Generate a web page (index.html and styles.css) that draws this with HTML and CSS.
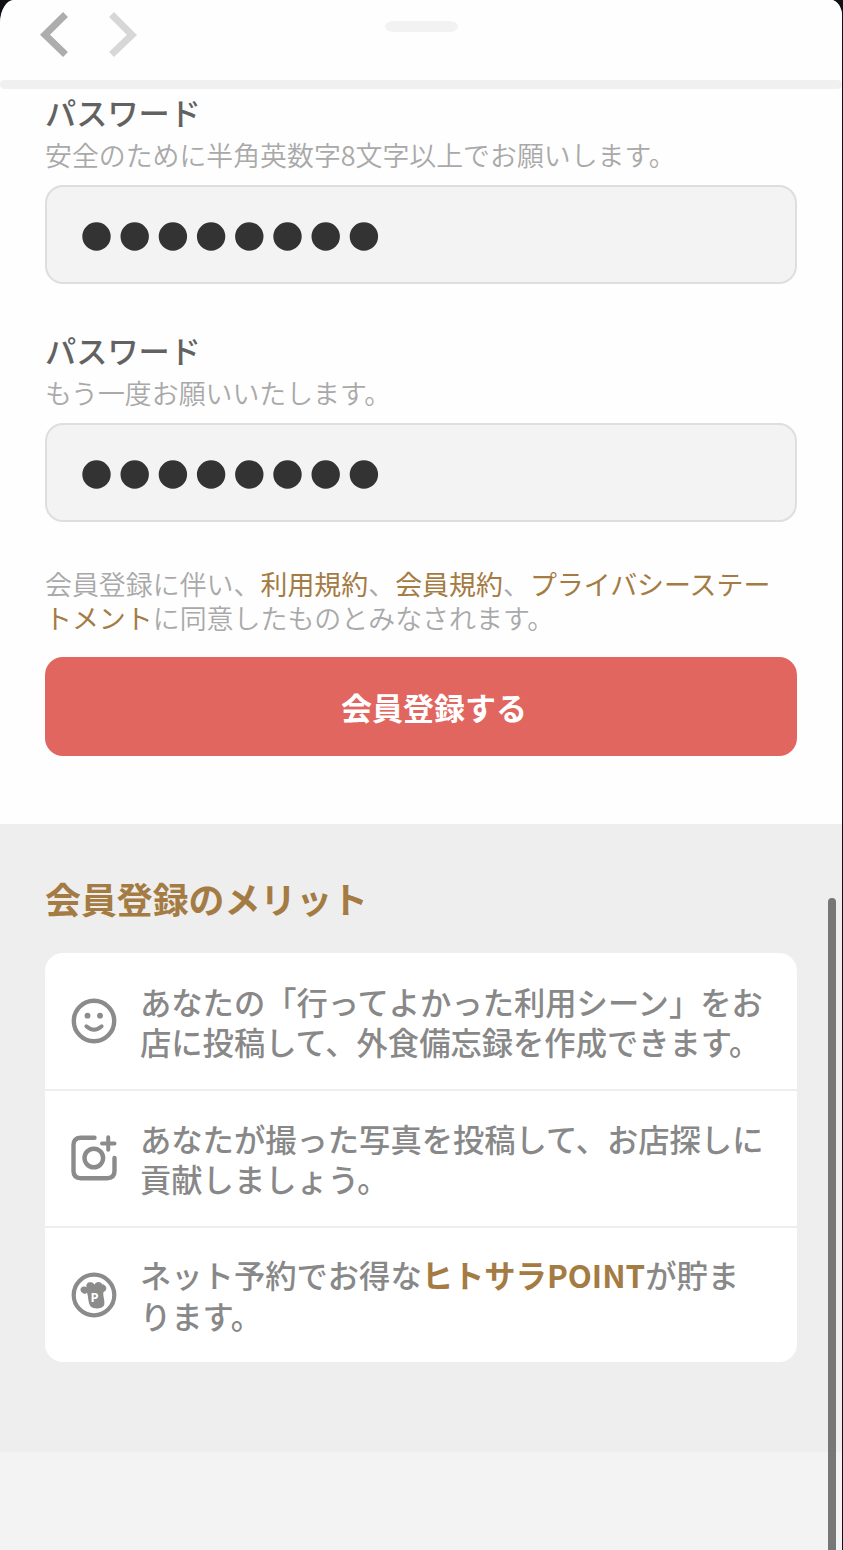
FILE: index.html
```html
<!DOCTYPE html>
<html lang="ja">
<head>
<meta charset="utf-8">
<title>会員登録</title>
<link rel="stylesheet" href="styles.css">
</head>
<body>
<div class="sheet">
  <header class="toolbar">
    <svg class="nav" width="110" height="50" viewBox="0 0 110 50" fill="none" stroke-width="7">
      <path d="M29.500 6.500 9 26.700 29.500 46.500" stroke="#adadad"/>
      <path d="M75.500 6.500 96 26.900 75.500 46.500" stroke="#d7d7d7"/>
    </svg>
    <span class="grabber"></span>
  </header>
  <div class="divider"></div>
  <svg width="0" height="0" class="defs">
    <symbol id="dots" viewBox="0 0 300 30">
      <path d="M15.500 15.500H283" fill="none" stroke="#333" stroke-width="28.400" stroke-linecap="round" stroke-dasharray="0 38.200"/>
    </symbol>
  </svg>
  <form class="form">
    <section class="field">
      <label class="label">パスワード</label>
      <p class="hint">安全のために半角英数字8文字以上でお願いします。</p>
      <div class="input"><svg width="300" height="30"><use href="#dots"/></svg></div>
    </section>
    <section class="field">
      <label class="label">パスワード</label>
      <p class="hint">もう一度お願いいたします。</p>
      <div class="input"><svg width="300" height="30"><use href="#dots"/></svg></div>
    </section>
    <p class="legal">会員登録に伴い、<a>利用規約</a>、<a>会員規約</a>、<a>プライバシーステー<br>トメント</a>に同意したものとみなされます。</p>
    <button class="submit" type="button">会員登録する</button>
  </form>
  <section class="merits">
    <h2 class="title">会員登録のメリット</h2>
    <ul class="card">
      <li class="row">
        <svg class="icon" width="46" height="46" viewBox="0 0 46 46" fill="none" stroke="#8b8b8b" stroke-linecap="round">
          <circle cx="23" cy="23" r="20.200" stroke-width="4.400"/>
          <path d="M15.300 28.300Q23 35 30.700 28.300" stroke-width="3.800"/>
          <circle cx="16.500" cy="17.700" r="2.900" fill="#8b8b8b" stroke="none"/>
          <circle cx="29" cy="17.700" r="2.900" fill="#8b8b8b" stroke="none"/>
        </svg>
        <p>あなたの「行ってよかった利用シーン」をお<br>店に投稿して、外食備忘録を作成できます。</p>
      </li>
      <li class="row">
        <svg class="icon" width="46" height="46" viewBox="0 0 46 46" fill="none" stroke="#8b8b8b" stroke-width="4.400" stroke-linecap="round">
          <path d="M23.500 2.800H10Q2.500 2.800 2.500 10V36Q2.500 43.200 10 43.200H36Q43.500 43.200 43.500 36V23"/>
          <circle cx="22.800" cy="23" r="9.300"/>
          <path d="M31 8.500H43.500M37.200 2.300V14.800" stroke-width="4"/>
        </svg>
        <p>あなたが撮った写真を投稿して、お店探しに<br>貢献しましょう。</p>
      </li>
      <li class="row">
        <svg class="icon" width="46" height="46" viewBox="0 0 46 46">
          <circle cx="23" cy="23" r="20.300" fill="none" stroke="#8b8b8b" stroke-width="4.200"/>
          <path d="M11 20.500C8.300 18.500 9.500 14.300 13 14.500 14 14.500 15 14.800 15.500 15.300 14.800 11.500 17 9.800 20 10.200 22 10.500 23 11.500 23.700 12.700 24.300 9.500 30 9 31 12.200 36 12.500 37 18.700 32.500 20 31.500 24 34.500 29 33 33.500 30.500 37.300 22.500 37.300 19.500 34.200 17 30.500 17.500 25 16 20.500 15 22.500 12.500 22 11 20.500Z" fill="#8b8b8b"/>
          <text class="coin" x="19.600" y="29.600">P</text>
        </svg>
        <p>ネット予約でお得な<b>ヒトサラPOINT</b>が貯ま<br>ります。</p>
      </li>
    </ul>
  </section>
  <div class="scrollbar"></div>
</div>
</body>
</html>
```
FILE: styles.css
```css
* { box-sizing: border-box; }
body {
  margin: 0;
  background: #101114;
  font-family: "Noto Sans CJK JP", sans-serif;
}
p, h2, ul { margin: 0; padding: 0; }
.sheet {
  position: relative;
  width: 842px;
  height: 1550px;
  overflow: hidden;
  background: #f3f3f3;
  border-radius: 14px 11px 0 0 / 24px 16px 0 0;
}
.toolbar {
  position: relative;
  height: 80px;
  background: #fefefe;
  padding: 8px 0 0 36px;
}
.nav { display: block; }
.defs { display: block; }
.grabber {
  position: absolute;
  left: 385px;
  top: 21px;
  width: 73px;
  height: 11px;
  border-radius: 9px / 5.5px;
  background: #f2f2f2;
}
.divider {
  height: 9px;
  background: #f0f0f0;
  border-radius: 5px;
  box-shadow: 0 0 0 9px #fefefe;
}
.form {
  position: relative;
  height: 734.500px;
  padding: 4px 45px 0;
  background: #fefefe;
}
.field { height: 238px; }
.label {
  display: block;
  font-size: 31.200px;
  line-height: 38px;
  font-weight: 500;
  color: #626262;
}
.hint {
  font-size: 26.900px;
  line-height: 34px;
  margin-top: 7px;
  font-weight: 350;
  color: #a9a9a9;
  white-space: nowrap;
}
.input {
  display: flex;
  align-items: center;
  width: 752px;
  height: 99px;
  margin-top: 13px;
  padding: 3px 0 0 34px;
  background: #f3f3f3;
  border: 2px solid #dedede;
  border-radius: 18px;
}
.legal {
  margin-top: -2px;
  font-size: 26.950px;
  line-height: 34px;
  font-weight: 350;
  color: #a9a9a9;
  white-space: nowrap;
}
.legal a { color: #a47b43; font-weight: 400; }
.submit {
  display: block;
  width: 752px;
  height: 99px;
  margin-top: 22px;
  padding: 0 0 0 26px;
  border: 0;
  border-radius: 18px;
  background: #e1665f;
  color: #fff;
  font: 700 31px/97px "Noto Sans CJK JP", sans-serif;
}
.merits {
  height: 628.500px;
  padding: 50.500px 45px 0;
  background: #eee;
}
.title {
  font-size: 35.900px;
  line-height: 48px;
  font-weight: 700;
  color: #a47b43;
}
.card {
  width: 752px;
  height: 409px;
  margin-top: 31px;
  border-radius: 18px;
  background: #fff;
  list-style: none;
}
.row {
  display: flex;
  align-items: center;
  height: 136.300px;
  padding-left: 26px;
  gap: 23px;
}
.row + .row { border-top: 2px solid #eee; }
.row p {
  padding-top: 2px;
  font-size: 31.300px;
  line-height: 40.500px;
  font-weight: 500;
  color: #888;
  white-space: nowrap;
}
.row b { color: #a47b43; font-weight: 700; }
.icon { flex: none; }
.coin {
  font: 700 13px "Noto Sans", sans-serif;
  fill: #fff;
}
.scrollbar {
  position: absolute;
  left: 828px;
  top: 898px;
  width: 8px;
  height: 670px;
  border-radius: 4px;
  background: #777;
}
```
